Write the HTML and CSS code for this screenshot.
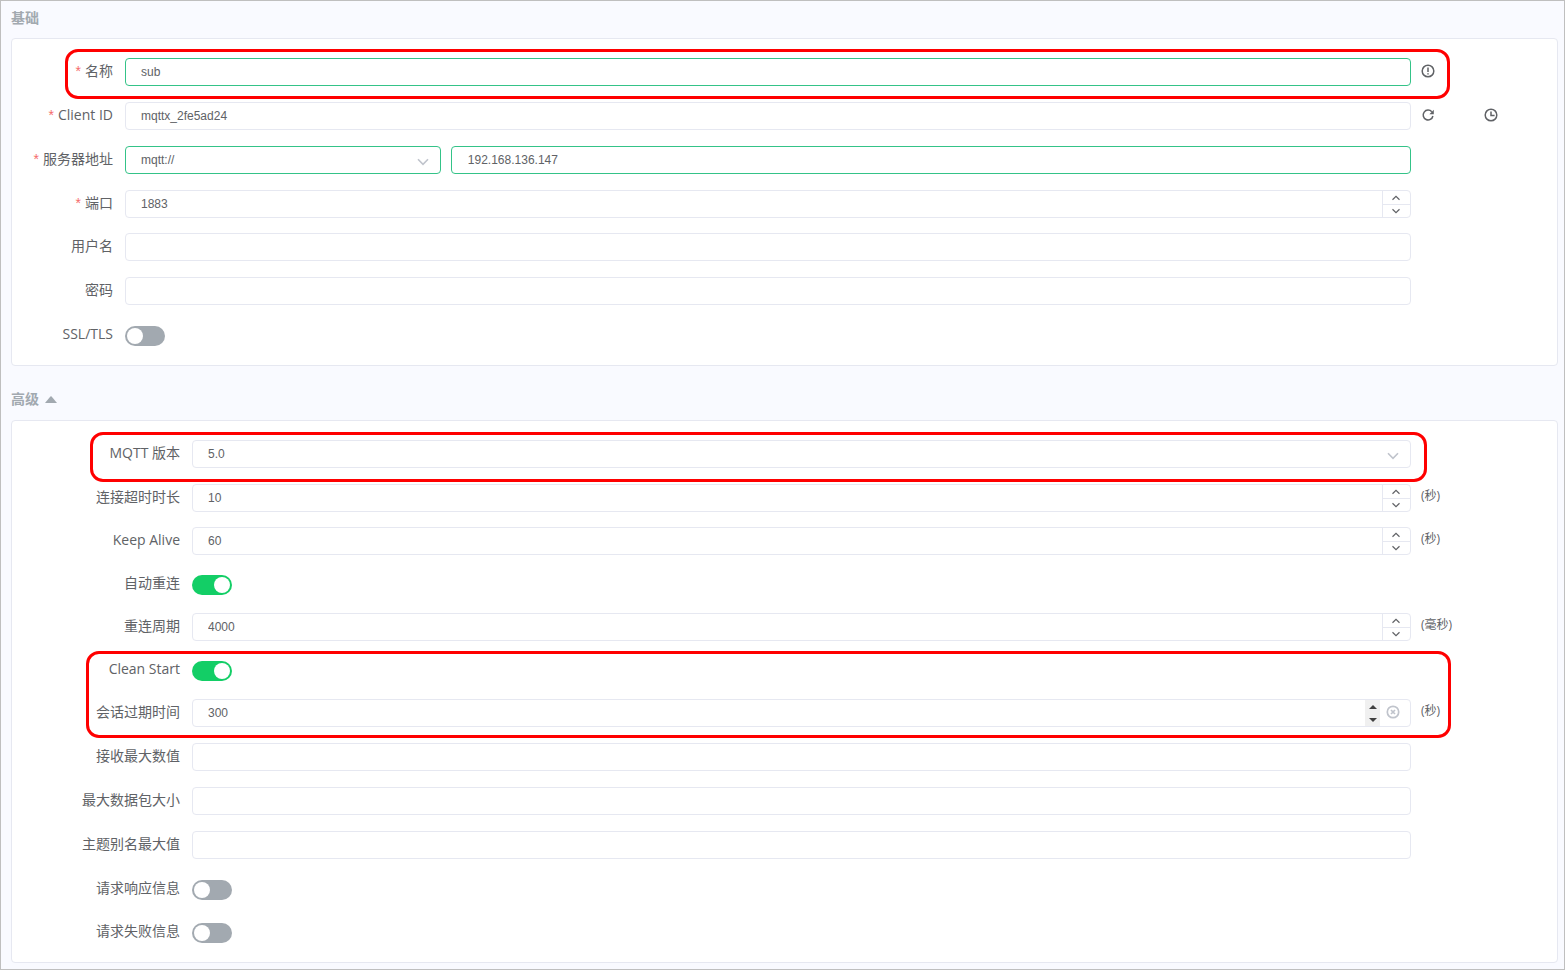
FILE: index.html
```html
<!DOCTYPE html>
<html lang="zh-CN">
<head>
<meta charset="utf-8">
<title>MQTT 连接</title>
<link rel="stylesheet" href="styles.css">
</head>
<body>
<svg class="defs" aria-hidden="true">
  <symbol id="up" viewBox="0 0 10 6"><path d="M1.5 4.8 5 1.4l3.5 3.4" /></symbol>
  <symbol id="down" viewBox="0 0 10 6"><path d="M1.5 1.2 5 4.6l3.5-3.4" /></symbol>
  <symbol id="arrow" viewBox="0 0 12 8"><path d="M1 1.2 6 6.4l5-5.2" /></symbol>
</svg>
<main class="page">
  <h2 class="title">基础</h2>
  <form class="card basic">
    <div class="row marked marked-name">
      <label class="label required" for="name">名称</label>
      <input class="field valid" id="name" type="text" value="sub">
      <div class="side">
        <button class="icon" type="button" aria-label="提示"><svg viewBox="0 0 14 14"><circle cx="7" cy="7" r="5.8"/><path d="M7 3.4v4.6M7 9.2v1.4" /></svg></button>
      </div>
    </div>
    <div class="row">
      <label class="label required" for="client">Client ID</label>
      <input class="field" id="client" type="text" value="mqttx_2fe5ad24">
      <div class="side">
        <button class="icon" type="button" aria-label="刷新"><svg viewBox="0 0 14 14"><path d="M10.8 3.8A4.9 4.9 0 1 0 11.9 8" /><path class="solid" d="M12.8 1.8v4.4H8.4l1.7-1.7z" /></svg></button>
        <button class="icon history" type="button" aria-label="时间"><svg viewBox="0 0 14 14"><circle cx="7" cy="7" r="5.8"/><path d="M7 3.4v4.1h3.6" /></svg></button>
      </div>
    </div>
    <div class="row">
      <label class="label required" for="host">服务器地址</label>
      <div class="server">
        <div class="control">
          <select class="field valid" aria-label="协议"><option>mqtt://</option></select>
          <svg class="arrow"><use href="#arrow"/></svg>
        </div>
        <input class="field valid" id="host" type="text" value="192.168.136.147">
      </div>
    </div>
    <div class="row tight">
      <label class="label required" for="port">端口</label>
      <div class="control">
        <input class="field" id="port" type="number" value="1883">
        <div class="stepper"><button type="button" aria-label="增加"><svg><use href="#up"/></svg></button><button type="button" aria-label="减少"><svg><use href="#down"/></svg></button></div>
      </div>
    </div>
    <div class="row">
      <label class="label" for="user">用户名</label>
      <input class="field" id="user" type="text">
    </div>
    <div class="row">
      <label class="label" for="pass">密码</label>
      <input class="field" id="pass" type="password">
    </div>
    <div class="row tight">
      <label class="label" for="ssl">SSL/TLS</label>
      <input class="switch" id="ssl" type="checkbox">
    </div>
  </form>

  <h2 class="title">高级 <svg class="caret" viewBox="0 0 12 7"><path d="M0 7 5.4.5q.6-.6 1.2 0L12 7z"/></svg></h2>
  <form class="card advanced">
    <div class="row marked marked-version">
      <label class="label" for="version">MQTT 版本</label>
      <div class="control">
        <select class="field" id="version"><option>5.0</option></select>
        <svg class="arrow"><use href="#arrow"/></svg>
      </div>
    </div>
    <div class="row tight">
      <label class="label" for="timeout">连接超时时长</label>
      <div class="control">
        <input class="field" id="timeout" type="number" value="10">
        <div class="stepper"><button type="button" aria-label="增加"><svg><use href="#up"/></svg></button><button type="button" aria-label="减少"><svg><use href="#down"/></svg></button></div>
      </div>
      <div class="side">(秒)</div>
    </div>
    <div class="row tight">
      <label class="label" for="keep">Keep Alive</label>
      <div class="control">
        <input class="field" id="keep" type="number" value="60">
        <div class="stepper"><button type="button" aria-label="增加"><svg><use href="#up"/></svg></button><button type="button" aria-label="减少"><svg><use href="#down"/></svg></button></div>
      </div>
      <div class="side">(秒)</div>
    </div>
    <div class="row tight">
      <label class="label" for="reconnect">自动重连</label>
      <input class="switch" id="reconnect" type="checkbox" checked>
    </div>
    <div class="row tight">
      <label class="label" for="period">重连周期</label>
      <div class="control">
        <input class="field" id="period" type="number" value="4000">
        <div class="stepper"><button type="button" aria-label="增加"><svg><use href="#up"/></svg></button><button type="button" aria-label="减少"><svg><use href="#down"/></svg></button></div>
      </div>
      <div class="side">(毫秒)</div>
    </div>
    <div class="group marked marked-session">
      <div class="row tight">
        <label class="label" for="clean">Clean Start</label>
        <input class="switch" id="clean" type="checkbox" checked>
      </div>
      <div class="row">
        <label class="label" for="expiry">会话过期时间</label>
        <div class="control">
          <input class="field" id="expiry" type="number" value="300">
          <div class="spin"><button type="button" aria-label="增加"><svg viewBox="0 0 8 4"><path d="M0 4 4 0l4 4z"/></svg></button><button type="button" aria-label="减少"><svg viewBox="0 0 8 4"><path d="m0 0 4 4 4-4z"/></svg></button></div>
          <button class="clear" type="button" aria-label="清除"><svg viewBox="0 0 14 14"><circle cx="7" cy="7" r="5.7"/><path d="m5 5 4 4M9 5 5 9"/></svg></button>
        </div>
        <div class="side">(秒)</div>
      </div>
    </div>
    <div class="row">
      <label class="label" for="receive">接收最大数值</label>
      <input class="field" id="receive" type="number">
    </div>
    <div class="row">
      <label class="label" for="packet">最大数据包大小</label>
      <input class="field" id="packet" type="number">
    </div>
    <div class="row">
      <label class="label" for="alias">主题别名最大值</label>
      <input class="field" id="alias" type="number">
    </div>
    <div class="row tight">
      <label class="label" for="response">请求响应信息</label>
      <input class="switch" id="response" type="checkbox">
    </div>
    <div class="row tight">
      <label class="label" for="problem">请求失败信息</label>
      <input class="switch" id="problem" type="checkbox">
    </div>
  </form>
</main>
</body>
</html>
```

FILE: styles.css
```css
* {
  box-sizing: border-box;
}

body {
  margin: 0;
  color: #606266;
  background: #f9faff;
  font-family: "Open Sans", "Noto Sans CJK SC", sans-serif;
  font-size: 14px;
}

.page {
  min-height: 100vh;
  padding: 6px 6px 6px 10px;
  border: 1px solid #bfbfbf;
}

.defs {
  display: none;
}

.title {
  display: flex;
  align-items: center;
  gap: 6px;
  height: 22px;
  margin: 0 0 9px;
  color: #a2a9b0;
  font-size: 14px;
  font-weight: 700;
  line-height: 22px;
}

.caret {
  width: 12px;
  height: 7px;
  fill: #a2a9b0;
}

.card {
  padding: 19px 0 1px;
  border: 1px solid #e6e8f1;
  border-radius: 4px;
  background: #fff;
}

.basic {
  margin-bottom: 22px;
}

.basic + .title {
  margin-bottom: 10px;
}

.row {
  display: grid;
  height: 28px;
  margin-bottom: 16px;
}

.basic .row {
  grid-template-columns: 113px minmax(0, 1fr) 146px;
}

.advanced .row {
  grid-template-columns: 180px minmax(0, 1fr) 146px;
}

.tight {
  margin-bottom: 15px;
}

.label {
  padding-right: 12px;
  line-height: 26px;
  text-align: right;
  white-space: nowrap;
}

.basic .label {
  width: 113px;
}

.advanced .label {
  width: 180px;
}

.basic .label,
.advanced .label {
  justify-self: end;
}

.required::before {
  content: "*";
  margin-right: 4px;
  color: #f56c6c;
  font-family: "Liberation Sans", Arial, sans-serif;
}

.control {
  position: relative;
}

.field {
  display: block;
  width: 100%;
  height: 28px;
  padding: 0 15px;
  border: 1px solid #e6e8f1;
  border-radius: 4px;
  outline: 0;
  color: #606266;
  background: #fff;
  font: 12px "Liberation Sans", Arial, sans-serif;
  appearance: none;
}

.field[type="number"] {
  appearance: textfield;
}

.field::-webkit-inner-spin-button {
  margin: 0;
  appearance: none;
}

.valid {
  border-color: #34c388;
}

.server {
  display: grid;
  grid-template-columns: minmax(0, 25fr) minmax(0, 76fr);
  gap: 10px;
}

.server > .field {
  padding-left: 16px;
}

.arrow {
  position: absolute;
  top: 12px;
  right: 12px;
  width: 12px;
  height: 8px;
  fill: none;
  stroke: #c0c4cc;
  stroke-width: 1.6;
  pointer-events: none;
}

button {
  display: flex;
  align-items: center;
  justify-content: center;
  padding: 0;
  border: 0;
  color: inherit;
  background: none;
}

.stepper {
  position: absolute;
  top: 1px;
  right: 1px;
  display: grid;
  grid-template-rows: 13px 13px;
  width: 28px;
  border-left: 1px solid #e6e8f1;
}

.stepper button {
  padding-right: 1px;
}

.stepper button + button {
  border-top: 1px solid #e6e8f1;
}

.stepper svg {
  width: 10px;
  height: 6px;
  fill: none;
  stroke: #606266;
  stroke-width: 1.2;
}

.spin {
  position: absolute;
  top: 1px;
  right: 31px;
  display: grid;
  grid-template-rows: 13px 13px;
  width: 15px;
  background: #f0f0f0;
}

.spin svg {
  width: 8px;
  height: 4px;
  fill: #404040;
}

.clear {
  position: absolute;
  top: 6px;
  right: 11px;
}

.clear svg {
  width: 14px;
  height: 14px;
  fill: none;
  stroke: #c0c4cc;
  stroke-width: 1.7;
}

.side {
  display: flex;
  align-items: center;
  height: 26px;
  padding-left: 10px;
  font-size: 12px;
  line-height: 24px;
}

.advanced .side {
  height: 24px;
}

.icon svg {
  width: 14px;
  height: 14px;
  fill: none;
  stroke: #606266;
  stroke-width: 1.5;
}

.icon .solid {
  fill: #606266;
  stroke: none;
}

.history {
  margin-left: 49px;
}

.switch {
  width: 40px;
  height: 20px;
  margin: 5px 0 0;
  padding: 2px;
  border-radius: 10px;
  background: #a2a9b0;
  appearance: none;
}

.switch::before {
  content: "";
  display: block;
  width: 16px;
  height: 16px;
  border-radius: 50%;
  background: #fff;
}

.switch:checked {
  background: #13ce66;
}

.switch:checked::before {
  margin-left: auto;
}

.marked {
  position: relative;
}

.marked::after {
  content: "";
  position: absolute;
  border: 3px solid #f00;
  border-radius: 13px;
  pointer-events: none;
}

.marked-name::after {
  inset: -9px 107px -13px 53px;
}

.marked-version::after {
  inset: -8px 130px -14px 78px;
}

.group {
  margin-bottom: 16px;
}

.group .row:last-child {
  margin-bottom: 0;
}

.marked-session::after {
  inset: -5px 106px -11px 74px;
}
```
